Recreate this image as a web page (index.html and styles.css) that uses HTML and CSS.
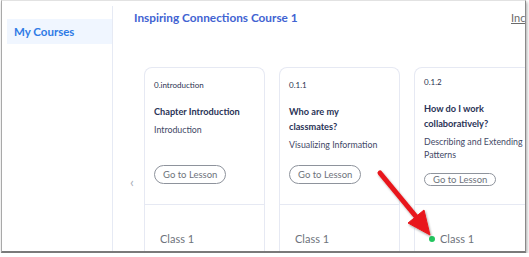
FILE: index.html
```html
<!DOCTYPE html>
<html>
<head>
<meta charset="utf-8">
<link rel="stylesheet" href="styles.css">
</head>
<body>
<div class="frame">
  <aside class="sidebar">
    <div class="nav-item">My Courses</div>
  </aside>
  <main class="main">
    <header class="header">
      <h1 class="course-title">Inspiring Connections Course 1</h1>
      <a class="header-link">Incomplete Lessons</a>
    </header>
    <div class="carousel">
      <div class="chevron">&#8249;</div>
      <div class="cards">
        <div class="card">
          <div class="card-top">
            <div class="label">0.introduction</div>
            <div class="card-title">Chapter Introduction</div>
            <div class="sub">Introduction</div>
            <div class="btn-slot"><span class="btn">Go to Lesson</span></div>
          </div>
          <div class="card-bottom"><span class="cls">Class 1</span></div>
        </div>
        <div class="card">
          <div class="card-top">
            <div class="label">0.1.1</div>
            <div class="card-title">Who are my<br>classmates?</div>
            <div class="sub">Visualizing Information</div>
            <div class="btn-slot"><span class="btn">Go to Lesson</span></div>
          </div>
          <div class="card-bottom"><span class="cls">Class 1</span></div>
        </div>
        <div class="card card-alt">
          <div class="card-top">
            <div class="label">0.1.2</div>
            <div class="card-title">How do I work<br>collaboratively?</div>
            <div class="sub">Describing and Extending<br>Patterns</div>
            <div class="btn-slot"><span class="btn">Go to Lesson</span></div>
          </div>
          <div class="card-bottom"><span class="dot"></span><span class="cls">Class 1</span></div>
        </div>
      </div>
    </div>
  </main>
  <svg class="arrow" width="529" height="257" viewBox="0 0 529 257">
    <defs>
      <filter id="sh" x="-20%" y="-20%" width="140%" height="140%">
        <feDropShadow dx="1" dy="1.5" stdDeviation="1.2" flood-color="#000" flood-opacity="0.35"/>
      </filter>
    </defs>
    <g filter="url(#sh)" fill="#e8191b" stroke="#e8191b">
      <line x1="380" y1="173" x2="418" y2="219" stroke-width="5" stroke-linecap="round"/>
      <polygon points="430,235 408,223 424,210" stroke-width="1" stroke-linejoin="round"/>
    </g>
  </svg>
</div>
</body>
</html>
```

FILE: styles.css
```css
* { box-sizing: border-box; margin: 0; padding: 0; }
html, body { background: #fff; }
body { margin: 0; font-family: Lato, "Open Sans", sans-serif; }

.frame {
  position: relative;
  width: 525px;
  height: 253px;
  margin-left: 1px;
  border-left: 1px solid #a9a9a9;
  border-top: 1px solid #e2e2e2;
  border-right: 1px solid #8a8a8a;
  border-bottom: 2px solid #7a7a7a;
  box-shadow: 1px 2px 3px rgba(0,0,0,0.35);
  display: flex;
  overflow: hidden;
  background: #fff;
}

.sidebar {
  width: 111px;
  flex-shrink: 0;
  margin-top: 5px;
  padding-top: 13px;
  padding-left: 5px;
  border-right: 1px solid #e6eaf4;
}
.nav-item {
  height: 25px;
  line-height: 25px;
  background: #f0f6ff;
  color: #2f7be6;
  font-weight: 700;
  font-size: 11.5px;
  padding-left: 7px;
}

.main {
  flex: 1;
  min-width: 0;
  overflow: hidden;
  display: flex;
  flex-direction: column;
}
.header {
  display: flex;
  align-items: center;
  padding-left: 21px;
  padding-top: 9px;
  height: 26px;
  white-space: nowrap;
}
.course-title {
  width: 377px;
  flex-shrink: 0;
  font-size: 11.8px;
  font-weight: 700;
  color: #4163d2;
}
.header-link {
  font-size: 11px;
  color: #6b6b6b;
  text-decoration: underline;
  flex-shrink: 0;
}

.carousel {
  display: flex;
  margin-top: 42px;
  flex: 1;
}
.chevron {
  width: 31px;
  flex-shrink: 0;
  padding-left: 17px;
  padding-top: 108px;
  color: #a8adb8;
  font-size: 14px;
  line-height: 14px;
}
.cards {
  display: flex;
  gap: 14px;
  flex-shrink: 0;
}
.card {
  width: 121px;
  height: 200px;
  border: 1px solid #e6e9f3;
  border-bottom: none;
  border-radius: 8px 8px 0 0;
  display: flex;
  flex-direction: column;
}
.card-top {
  height: 137px;
  padding: 11px 0 0 9px;
  border-bottom: 1px solid #e6e9f3;
  display: flex;
  flex-direction: column;
}
.label {
  font-size: 8px;
  line-height: 12px;
  color: #2a3150;
}
.card-title {
  margin-top: 13px;
  font-size: 9.2px;
  font-weight: 700;
  line-height: 15px;
  color: #2a3356;
}
.sub {
  margin-top: 5px;
  font-size: 8.8px;
  line-height: 12.5px;
  color: #3f4866;
  white-space: nowrap;
}
.btn-slot {
  margin-top: auto;
  margin-bottom: 20px;
}
.btn {
  display: inline-block;
  height: 19px;
  line-height: 17px;
  padding: 0 8px;
  border: 1px solid #8e939c;
  border-radius: 10px;
  font-size: 9.5px;
  color: #6e737c;
}
.card-alt .card-top { padding-top: 8px; }
.card-alt .btn-slot { margin-bottom: 18px; }
.card-alt .btn { height: 13px; line-height: 11px; }

.card-bottom {
  display: flex;
  align-items: center;
  padding: 27px 0 0 15px;
}
.card-alt .card-bottom { padding-left: 14px; }
.cls {
  font-size: 11px;
  color: #6e737c;
}
.dot {
  width: 6px;
  height: 6px;
  border-radius: 50%;
  background: #22c55e;
  margin-right: 5px;
}

.arrow {
  position: absolute;
  left: -2px;
  top: -1px;
  pointer-events: none;
}
```
